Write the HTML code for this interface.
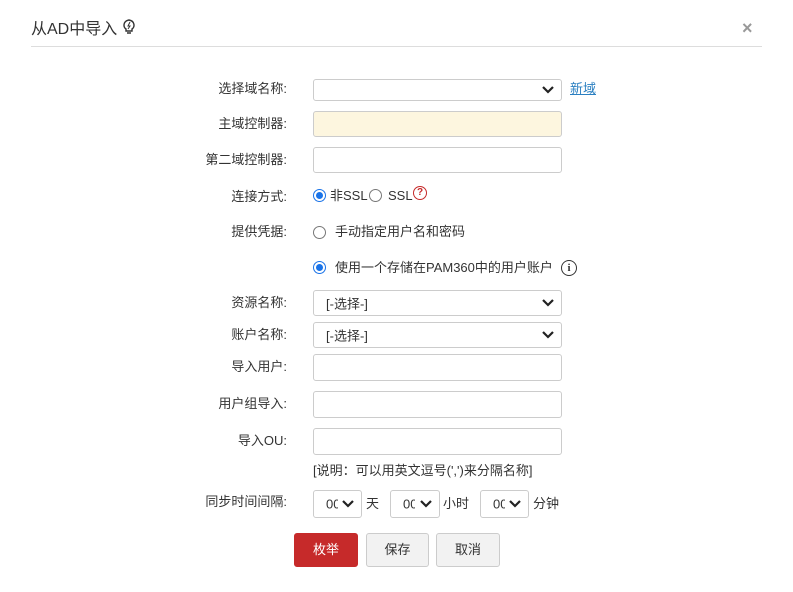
<!DOCTYPE html>
<html><head><meta charset="utf-8"><style>
body{margin:0;width:793px;height:592px;background:#fff;font-family:"Liberation Sans","Noto Sans CJK SC",sans-serif;font-size:13px;color:#333;position:relative;overflow:hidden}
.a{position:absolute;line-height:16px}
.lbl{position:absolute;right:506px;white-space:nowrap;line-height:16px}
.in{position:absolute;left:313px;width:247px;border:1px solid #ccc;border-radius:3px;background:#fff}
.sel .t{position:absolute;left:12px;top:50%;transform:translateY(-50%)}
.chev{position:absolute;right:6px;top:50%;margin-top:-5px}
.btn{position:absolute;top:533px;height:32px;border:1px solid #ccc;border-radius:3px;background:#f2f2f2;text-align:center;line-height:32px;font-size:13px;color:#333}
.radio{position:absolute;width:11px;height:11px;border:1px solid #777;border-radius:50%;background:#fff}
.radio.on{border-color:#1a73e8}
.radio.on:after{content:"";position:absolute;left:2px;top:2px;width:7px;height:7px;border-radius:50%;background:#1a73e8}
</style></head><body>
<div class="a" style="left:31px;top:22px;font-size:16px;color:#333">从AD中导入</div>
<svg class="a" style="left:122px;top:18px" width="14" height="17" viewBox="0 0 14 17"><path d="M4 11 C1 9 1 3 7 2 C13 3 13 9 10 11 L10 13 L4 13 Z M5 15 H9" fill="none" stroke="#333" stroke-width="1.4"/><path d="M8 4 L6 8 H8 L6 11" fill="none" stroke="#333" stroke-width="1"/></svg>
<div class="a" style="left:742px;top:20px;font-size:18px;color:#999;font-weight:bold">×</div>
<div class="a" style="left:31px;top:46px;width:731px;height:1px;background:#ddd"></div>

<div class="lbl" style="top:81px">选择域名称:</div>
<div class="in sel" style="top:79px;height:20px"><svg class="chev" width="14" height="10"><path d="M2 2 L7 7 L12 2" fill="none" stroke="#222" stroke-width="2.2"/></svg></div>
<div class="a" style="left:570px;top:81px;color:#2a7fc1;text-decoration:underline">新域</div>

<div class="lbl" style="top:116px">主域控制器:</div>
<div class="in" style="top:111px;height:24px;background:#fdf6df"></div>
<div class="lbl" style="top:152px">第二域控制器:</div>
<div class="in" style="top:147px;height:24px"></div>

<div class="lbl" style="top:189px">连接方式:</div>
<div class="radio on" style="left:313px;top:189px"></div>
<div class="a" style="left:330px;top:188px">非SSL</div>
<div class="radio" style="left:369px;top:189px"></div>
<div class="a" style="left:388px;top:188px">SSL</div>
<div class="a" style="left:413px;top:186px;width:12px;height:12px;border:1.5px solid #c62a2a;border-radius:50%;color:#c62a2a;font-size:10px;font-weight:bold;text-align:center;line-height:12px">?</div>

<div class="lbl" style="top:224px">提供凭据:</div>
<div class="radio" style="left:313px;top:226px"></div>
<div class="a" style="left:335px;top:224px">手动指定用户名和密码</div>
<div class="radio on" style="left:313px;top:261px"></div>
<div class="a" style="left:335px;top:260px">使用一个存储在PAM360中的用户账户</div>
<div class="a" style="left:561px;top:260px;width:14px;height:14px;border:1.5px solid #333;border-radius:50%;font-size:11px;font-weight:bold;text-align:center;line-height:14px;font-family:'Liberation Serif',serif">i</div>

<div class="lbl" style="top:295px">资源名称:</div>
<div class="in sel" style="top:290px;height:24px"><span class="t">[-选择-]</span><svg class="chev" width="14" height="10"><path d="M2 2 L7 7 L12 2" fill="none" stroke="#222" stroke-width="2.2"/></svg></div>
<div class="lbl" style="top:327px">账户名称:</div>
<div class="in sel" style="top:322px;height:24px"><span class="t">[-选择-]</span><svg class="chev" width="14" height="10"><path d="M2 2 L7 7 L12 2" fill="none" stroke="#222" stroke-width="2.2"/></svg></div>

<div class="lbl" style="top:359px">导入用户:</div>
<div class="in" style="top:354px;height:25px"></div>
<div class="lbl" style="top:396px">用户组导入:</div>
<div class="in" style="top:391px;height:25px"></div>
<div class="lbl" style="top:433px">导入OU:</div>
<div class="in" style="top:428px;height:25px"></div>
<div class="a" style="left:313px;top:463px">[说明：可以用英文逗号(',')来分隔名称]</div>

<div class="lbl" style="top:494px">同步时间间隔:</div>
<div class="in sel" style="top:490px;height:26px;width:47px"><span class="t" style="left:12px;width:12px;overflow:hidden">00</span><svg class="chev" width="14" height="10"><path d="M2 2 L7 7 L12 2" fill="none" stroke="#222" stroke-width="2.2"/></svg></div>
<div class="a" style="left:366px;top:496px">天</div>
<div class="in sel" style="left:390px;top:490px;height:26px;width:48px"><span class="t" style="left:12px;width:12px;overflow:hidden">00</span><svg class="chev" width="14" height="10"><path d="M2 2 L7 7 L12 2" fill="none" stroke="#222" stroke-width="2.2"/></svg></div>
<div class="a" style="left:443px;top:496px">小时</div>
<div class="in sel" style="left:480px;top:490px;height:26px;width:47px"><span class="t" style="left:12px;width:12px;overflow:hidden">00</span><svg class="chev" width="14" height="10"><path d="M2 2 L7 7 L12 2" fill="none" stroke="#222" stroke-width="2.2"/></svg></div>
<div class="a" style="left:533px;top:496px">分钟</div>

<div class="btn" style="left:294px;width:62px;background:#c62a2a;border-color:#c62a2a;color:#fff">枚举</div>
<div class="btn" style="left:366px;width:61px">保存</div>
<div class="btn" style="left:436px;width:62px">取消</div>
</body></html>
